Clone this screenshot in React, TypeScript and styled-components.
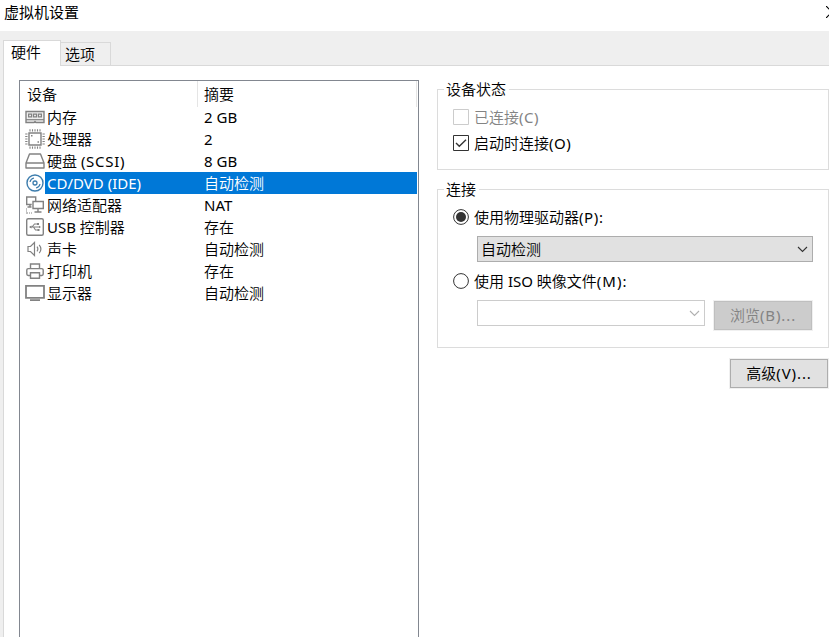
import React from "react";
import styled, { createGlobalStyle, css } from "styled-components";

const Global = createGlobalStyle`
  * { box-sizing: border-box; }
  html, body, #root { margin: 0; height: 100%; overflow: hidden; }
  body { background: #fff; color: #000; font: 15px/22px "Noto Sans", "Noto Sans CJK SC DemiLight", "Noto Sans CJK SC Light", "Noto Sans CJK SC", sans-serif; }
  button { font: inherit; padding: 0; }
`;

const Window = styled.div`
  display: flex;
  flex-direction: column;
  width: 829px;
  height: 637px;
  overflow: hidden;
  background: #efefef;
`;

const TitleBar = styled.header`
  display: flex;
  justify-content: space-between;
  height: 31px;
  flex: none;
  padding: 1px 0 0 4px;
  overflow: hidden;
  background: #fff;
  font-family: "Noto Sans", "Noto Sans CJK SC", sans-serif;
`;

const CloseIcon = styled.svg`
  width: 3px;
  height: 12px;
  margin-top: 5px;
`;

const TabStrip = styled.nav`
  display: flex;
  align-items: flex-end;
  height: 35px;
  flex: none;
  margin-left: 3px;
  box-shadow: inset 0 -1px #d9d9d9;
`;

const Tab = styled.div<{ $active?: boolean }>`
  border: 1px solid #d9d9d9;
  border-left-width: 0;
  ${({ $active }) =>
    $active
      ? css`width: 58px; height: 26px; padding: 0 0 0 7px; background: #fff; border-left-width: 1px; border-bottom: 0;`
      : css`width: 50px; height: 24px; padding: 0 0 0 4px;`}
`;

const Page = styled.main`
  display: flex;
  flex: 1;
  align-items: stretch;
  margin-left: 3px;
  padding: 14px 0 0 15px;
  border-left: 1px solid #d9d9d9;
  background: #fff;
`;

const DeviceList = styled.section`
  width: 400px;
  padding-left: 5px;
  border: 1px solid #828790;
  border-bottom: 0;
`;

const Row = styled.div<{ $selected?: boolean }>`
  display: grid;
  grid-template-columns: 20px 1fr;
  height: 22px;
  margin-right: 1px;
  svg { align-self: center; }
  > div { color: ${({ $selected }) => ($selected ? "#fff" : "#000")}; background: ${({ $selected }) => ($selected ? "#0078d7" : "transparent")}; }
`;

const Cells = styled.div`
  display: grid;
  grid-template-columns: 157px 1fr;
  padding-left: 2px;
  white-space: nowrap;
`;

const ListHeader = styled.div`
  display: grid;
  grid-template-columns: 171px 1fr;
  height: 25px;
  margin-right: 1px;
  padding-left: 2px;
  line-height: 26px;
`;

const HeaderCell = styled.span`
  border-right: 1px solid #e5e5e5;
  & + & { padding-left: 6px; }
`;

const Settings = styled.section`
  display: flex;
  flex-direction: column;
  width: 392px;
  margin-left: 18px;
`;

const Group = styled.fieldset<{ $height: number }>`
  height: ${({ $height }) => $height}px;
  margin: 0;
  padding: 0 0 0 15px;
  border: 1px solid #dcdcdc;
  min-width: 0;
  & + & { margin-top: 10px; }
`;

const Legend = styled.legend`
  height: 18px;
  margin-left: -9px;
  padding: 0 3px 0 2px;
  line-height: 18px;
`;

const Option = styled.label<{ $disabled?: boolean }>`
  display: flex;
  align-items: center;
  gap: 5px;
  height: 26px;
  color: ${({ $disabled }) => ($disabled ? "#838383" : "#000")};
`;

const Latin = styled.span<{ $tracking: number }>`
  letter-spacing: ${({ $tracking }) => $tracking}px;
`;

const Options = styled.div`
  padding-top: 6px;
`;

const Combo = styled.div<{ $disabled?: boolean; $width: number }>`
  display: flex;
  align-items: center;
  justify-content: space-between;
  width: ${({ $width }) => $width}px;
  height: 26px;
  padding: 0 4px 0 3px;
  border: 1px solid ${({ $disabled }) => ($disabled ? "#cccccc" : "#adadad")};
  background: ${({ $disabled }) => ($disabled ? "#fff" : "#e1e1e1")};
  color: ${({ $disabled }) => ($disabled ? "#b0b0b0" : "#333")};
`;

const ComboText = styled.span`
  color: #000;
`;

const Indent = styled.div`
  display: flex;
  align-items: flex-start;
  gap: 9px;
  padding-left: 24px;
`;

const DriveOptions = styled.div`
  display: flex;
  flex-direction: column;
  gap: 6px;
  padding-top: 6px;
`;

const PushButton = styled.button`
  width: 98px;
  height: 29px;
  padding-bottom: 2px;
  border: 1px solid #adadad;
  box-shadow: 0 0 0 1px #f0f0f0;
  background: #e1e1e1;
  color: #000;
  &:disabled { margin-top: 1px; border-color: #bfbfbf; background: #ccc; color: #838383; }
`;

const Footer = styled.div`
  display: flex;
  justify-content: flex-end;
  padding: 11px 1px 0 0;
`;

const Icon = ({ children }: { children: React.ReactNode }) => (
  <svg width="20" height="20" viewBox="0 0 20 20" fill="none" stroke="#828282" strokeWidth="1.4">{children}</svg>
);

const icons = {
  memory: (
    <Icon>
      <path d="M1 4.5h18v11h-8l-1-1-1 1H1z" fill="#eee" />
      <path d="M3.6 7.1h3v2.8h-3zM8.5 7.1h3v2.8h-3zM13.4 7.1h3v2.8h-3z" strokeWidth="1.2" />
      <path d="M1 12.7h18" strokeWidth="1.2" />
    </Icon>
  ),
  cpu: (
    <Icon>
      <path d="M4 4h12v12H4z" />
      <path d="M5 .2v2.3M7.5 .2v2.3M10 .2v2.3M12.5 .2v2.3M15 .2v2.3M5 17.5v2.3M7.5 17.5v2.3M10 17.5v2.3M12.5 17.5v2.3M15 17.5v2.3M.2 5h2.3M.2 7.5h2.3M.2 10h2.3M.2 12.5h2.3M.2 15h2.3M17.5 5h2.3M17.5 7.5h2.3M17.5 10h2.3M17.5 12.5h2.3M17.5 15h2.3" strokeWidth="1.1" />
      <path d="M6 6.7h1.5M12.5 13H14" />
    </Icon>
  ),
  disk: (
    <Icon><path d="M4.5 3h11L19 12H1zM1 12v5h18v-5" strokeLinejoin="round" /></Icon>
  ),
  disc: (
    <Icon>
      <g stroke="#3d7dad"><circle cx="10" cy="10" r="8" /><circle cx="10" cy="10" r="2" strokeWidth="1.3" /><path d="M5 9A5 5 0 0 1 9 5M15 11a5 5 0 0 1-4 4" strokeWidth="1.2" /></g>
    </Icon>
  ),
  network: (
    <Icon>
      <path d="M10.7 6V2H1.7v7.5h5M8 6.5h10.3v7H8zM13 14v3.2M9.5 17h7M5 9.5v2.2M2.5 12h4" />
      <path d="M1.5 13.5v5M2 18h6" strokeDasharray="1 1" strokeWidth="1" />
    </Icon>
  ),
  usb: (
    <Icon>
      <rect x="1.7" y="1.7" width="16.6" height="16.6" rx="1.5" />
      <path d="M5 10h10M7 10l2.5-3H12M8.5 10l2 3H13" strokeWidth="1.1" />
      <path d="M4 10l2.5-1.5v3zM12 6h2v2h-2zM12.5 12h2v2h-2zM16 10l-2-1.2v2.4z" fill="#828282" stroke="none" />
    </Icon>
  ),
  sound: (
    <Icon><path d="M3 7.5h2.5l4-4v13l-4-4H3zM12 7.7q1.7 2.3 0 4.6M14.2 5.8q3.4 4.2 0 8.4" strokeWidth="1.2" /></Icon>
  ),
  printer: (
    <Icon>
      <path d="M5.5 7.5V3h9v4.5M5 14.5H3.2q-1.4 0-1.4-1.4V9q0-1.4 1.4-1.4h13.6q1.4 0 1.4 1.4v4.1q0 1.4-1.4 1.4H15M5.5 11.7h9v5.6h-9z" />
    </Icon>
  ),
  display: (
    <Icon><path d="M1 2.8h18v12H1zM5 17.2h10" strokeWidth="1.8" /></Icon>
  ),
};

type Device = { icon: keyof typeof icons; name: string; latin?: string; summary: string; selected?: boolean };

const devices: Device[] = [
  { icon: "memory", name: "内存", summary: "2 GB" },
  { icon: "cpu", name: "处理器", summary: "2" },
  { icon: "disk", name: "硬盘 ", latin: "(SCSI)", summary: "8 GB" },
  { icon: "disc", name: "CD/DVD (IDE)", summary: "自动检测", selected: true },
  { icon: "network", name: "网络适配器", summary: "NAT" },
  { icon: "usb", name: "USB 控制器", summary: "存在" },
  { icon: "sound", name: "声卡", summary: "自动检测" },
  { icon: "printer", name: "打印机", summary: "存在" },
  { icon: "display", name: "显示器", summary: "自动检测" },
];

const CheckBox = ({ checked }: { checked?: boolean }) => (
  <svg width="16" height="16" viewBox="0 0 16 16" fill="none">
    <path d="M.5.5h15v15H.5z" stroke={checked ? "#333" : "#ccc"} />
    {checked && <path d="M3 8l3.3 3.3L13 4.8" stroke="#333" strokeWidth="1.4" />}
  </svg>
);

const Radio = ({ checked }: { checked?: boolean }) => (
  <svg width="16" height="16" viewBox="0 0 16 16">
    <circle cx="8" cy="8" r="7.4" fill="#fff" stroke="#333" />
    {checked && <circle cx="8" cy="8" r="5" fill="#333" />}
  </svg>
);

const Chevron = () => (
  <svg width="11" height="7" viewBox="0 0 11 7" fill="none" stroke="currentColor" strokeWidth="1.1"><path d="M1 1l4.5 4.5L10 1" /></svg>
);

export default function App() {
  return (
    <>
      <Global />
      <Window>
        <TitleBar>
          <span>虚拟机设置</span>
          <CloseIcon viewBox="0 0 3 12" stroke="#000" strokeWidth="1.2" fill="none"><path d="M0 0l6 6-6 6" /></CloseIcon>
        </TitleBar>
        <TabStrip>
          <Tab $active>硬件</Tab>
          <Tab>选项</Tab>
        </TabStrip>
        <Page>
          <DeviceList>
            <ListHeader>
              <HeaderCell>设备</HeaderCell>
              <HeaderCell>摘要</HeaderCell>
            </ListHeader>
            {devices.map((d) => (
              <Row key={d.name} $selected={d.selected}>
                {icons[d.icon]}
                <Cells>
                  <span>{d.name}{d.latin && <Latin $tracking={0.7}>{d.latin}</Latin>}</span>
                  <span>{d.summary}</span>
                </Cells>
              </Row>
            ))}
          </DeviceList>
          <Settings>
            <Group $height={90}>
              <Legend>设备状态</Legend>
              <Options>
                <Option $disabled><CheckBox /><span>已连接<Latin $tracking={0.5}>(C)</Latin></span></Option>
                <Option><CheckBox checked /><span>启动时连接<Latin $tracking={0.5}>(O)</Latin></span></Option>
              </Options>
            </Group>
            <Group $height={168}>
              <Legend>连接</Legend>
              <DriveOptions>
                <Option><Radio checked /><span>使用物理驱动器<Latin $tracking={0.6}>(P):</Latin></span></Option>
                <Indent><Combo $width={336}><ComboText>自动检测</ComboText><Chevron /></Combo></Indent>
                <Option><Radio /><span>使用 ISO 映像文件<Latin $tracking={1}>(M):</Latin></span></Option>
                <Indent>
                  <Combo $width={228} $disabled><ComboText /><Chevron /></Combo>
                  <PushButton disabled>浏览<Latin $tracking={0.9}>(B)...</Latin></PushButton>
                </Indent>
              </DriveOptions>
            </Group>
            <Footer><PushButton>高级<Latin $tracking={0.9}>(V)...</Latin></PushButton></Footer>
          </Settings>
        </Page>
      </Window>
    </>
  );
}
